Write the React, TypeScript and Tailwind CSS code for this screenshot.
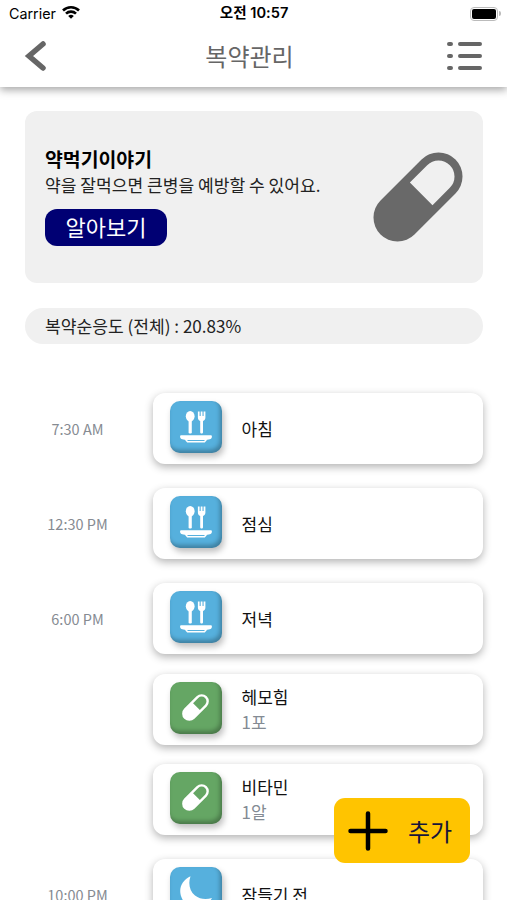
type IconName = "meal" | "pill" | "moon";

type Item = {
  icon: IconName;
  name: string;
  amount?: string;
};

type Group = {
  time: string;
  items: Item[];
};

const schedule: Group[] = [
  { time: "7:30 AM", items: [{ icon: "meal", name: "아침" }] },
  { time: "12:30 PM", items: [{ icon: "meal", name: "점심" }] },
  {
    time: "6:00 PM",
    items: [
      { icon: "meal", name: "저녁" },
      { icon: "pill", name: "헤모힘", amount: "1포" },
      { icon: "pill", name: "비타민", amount: "1알" },
    ],
  },
  { time: "10:00 PM", items: [{ icon: "moon", name: "잠들기 전" }] },
];

function PillIcon({ className }: { className: string }) {
  return (
    <svg viewBox="0 0 90 90" className={className} fill="currentColor">
      <g transform="rotate(-45 45 45)">
        <path
          fillRule="evenodd"
          d="M16 21H74A24 24 0 0 1 74 69H16A24 24 0 0 1 16 21ZM49.5 29V61H74A16 16 0 0 0 74 29Z"
        />
      </g>
    </svg>
  );
}

function MealIcon() {
  return (
    <svg viewBox="0 0 52 52" className="size-[52px]" fill="currentColor">
      <ellipse cx="20.2" cy="15.3" rx="4.4" ry="5.2" />
      <rect x="18.6" y="18" width="3.2" height="14.5" rx="1.2" />
      <path d="M27.9 10.5h1.7v4.4h1.1v-4.4h1.8v4.4h1.1v-4.4h1.8v6.1c0 1.9-1 3-2.4 3.4v11.2c0 .8-.6 1.3-1.4 1.3s-1.4-.5-1.4-1.3V20c-1.4-.4-2.3-1.5-2.3-3.4Z" />
      <path d="M11 34.2h30c1.1 0 1.100 1.700.6 2.700-.4.9-1.400 1.300-2.900 1.600l-2.700.4H16l-2.700-.4c-1.500-.3-2.500-.7-2.900-1.600-.5-1-.5-2.700.6-2.700Z" />
      <path
        d="M15.5 38.200l2 2.600h17l2-2.600"
        fill="none"
        stroke="currentColor"
        strokeWidth="1.500"
      />
    </svg>
  );
}

function MoonIcon() {
  return (
    <svg viewBox="0 0 52 52" className="size-[52px]" fill="currentColor">
      <path d="M20.5 9.200C11 13.500 7.500 23.500 12.500 32.500c6 11 22.500 11 29.500-1.500-5.500 1.500-12 1.500-17-2.500-5.500-4.500-7-12-4.500-19.300Z" />
    </svg>
  );
}

function Tile({ icon }: { icon: IconName }) {
  const color = icon === "pill" ? "bg-[#65a664]" : "bg-[#56b0dd]";
  return (
    <div
      className={`${color} flex size-[52px] shrink-0 items-center justify-center rounded-[10px] text-white shadow-[2px_4px_6px_rgba(0,0,0,0.25),inset_-2px_-3px_4px_rgba(0,0,0,0.28)]`}>
      {icon === "meal" && <MealIcon />}
      {icon === "pill" && <PillIcon className="size-[27px]" />}
      {icon === "moon" && <MoonIcon />}
    </div>
  );
}

function StatusBar() {
  return (
    <div className="flex h-[27px] items-center justify-between pr-[6px] pl-[9px] font-['Inter','Noto_Sans_CJK_KR',sans-serif] text-black">
      <div className="flex flex-1 items-center gap-[6px] text-[14.3px]">
        Carrier
        <svg viewBox="0 0 18 14" className="mb-[3px] h-[14px] w-[18px]">
          <g fill="none" stroke="#000" strokeWidth="2.6">
            <path d="M1 5.5a11.3 11.3 0 0 1 16 0" />
            <path d="M4 8.7a7.1 7.1 0 0 1 10 0" />
          </g>
          <path d="M9 13.8 6.2 11a4 4 0 0 1 5.6 0Z" />
        </svg>
      </div>
      <div className="mr-[2px] text-[14.6px] font-semibold">오전 10:57</div>
      <div className="flex flex-1 items-center justify-end gap-px">
        <div className="h-[14px] w-[28px] rounded-[4px] border-[1.5px] border-[#bbb] p-px">
          <div className="h-full rounded-[2px] bg-black" />
        </div>
        <div className="h-[5px] w-[2px] rounded-r-full bg-[#bbb]" />
      </div>
    </div>
  );
}

function Header() {
  return (
    <header className="relative h-[87px] bg-white shadow-[0_3px_8px_rgba(0,0,0,0.35)]">
      <StatusBar />
      <div className="flex h-[58px] items-center justify-between px-[24px] text-[#666]">
        <svg viewBox="0 0 24 32" className="mr-[5px] h-[32px] w-[24px]">
          <path
            d="M19 4 5 16l14 12"
            fill="none"
            stroke="currentColor"
            strokeWidth="5.5"
            strokeLinecap="round"
          />
        </svg>
        <h1 className="pb-px text-[24px] leading-none">복약관리</h1>
        <svg viewBox="0 0 37 30" className="h-[30px] w-[37px]" fill="none">
          <path
            d="M14 3H34M14 15H34M14 27H34M3 3h2M3 15h2M3 27h2"
            stroke="currentColor"
            strokeWidth="4"
            strokeLinecap="round"
          />
        </svg>
      </div>
    </header>
  );
}

function Banner() {
  return (
    <section className="flex h-[172px] items-center justify-between rounded-[12px] bg-[#f0f0f0] pr-[20px] pl-[20px]">
      <div className="pb-[3px]">
        <h2 className="text-[19.4px] leading-[26px] font-bold text-black">약먹기이야기</h2>
        <p className="text-[17.1px] leading-[26px]">약을 잘먹으면 큰병을 예방할 수 있어요.</p>
        <button className="mt-[11px] flex h-[37px] w-[122px] items-center justify-center rounded-[12px] bg-[#000073] pb-px text-[22px] text-white">
          알아보기
        </button>
      </div>
      <PillIcon className="size-[90px] text-[#696969]" />
    </section>
  );
}

function Card({ item }: { item: Item }) {
  return (
    <div className="flex h-[71px] items-start rounded-[12px] bg-white pt-[8px] pl-[16.5px] shadow-[0_3px_9px_rgba(0,0,0,0.3)]">
      <Tile icon={item.icon} />
      <div className="ml-[20px] flex h-[54px] flex-col justify-center text-[17px] leading-[25px] text-[#111]">
        <p>{item.name}</p>
        {item.amount && <p className="text-[#848b94]">{item.amount}</p>}
      </div>
    </div>
  );
}

export default function App() {
  return (
    <div className="relative h-[900px] w-[507px] overflow-hidden bg-white font-['Noto_Sans_CJK_KR',sans-serif] text-[#222]">
      <Header />
      <main className="pt-[24px] pr-[24px] pl-[25px]">
        <Banner />
        <div className="mt-[25px] flex h-[36px] items-center rounded-full bg-[#f0f0f0] pl-[20px] text-[17.1px]">
          복약순응도 (전체) : 20.83%
        </div>
        <div className="mt-[49px] flex flex-col gap-[24.2px]">
          {schedule.map((group) => (
            <div key={group.time} className="flex">
              <div className="flex h-[71px] w-[105px] shrink-0 items-center justify-center text-[14.5px] text-[#868b92]">
                {group.time}
              </div>
              <div className="ml-[23px] flex flex-1 flex-col gap-[19.3px]">
                {group.items.map((item) => (
                  <Card key={item.name} item={item} />
                ))}
              </div>
            </div>
          ))}
        </div>
      </main>

      {/* add button */}
      <button className="absolute top-[798px] left-[334px] flex h-[65px] w-[136px] items-center rounded-[11px] bg-[#ffc400] pl-[14px] text-[24px] text-[#17153a]">
        <svg viewBox="0 0 40 40" className="size-[40px]">
          <path d="M20 2.5v35M2.5 20h35" stroke="#000" strokeWidth="4.5" strokeLinecap="round" />
        </svg>
        <span className="ml-[20px]">추가</span>
      </button>
    </div>
  );
}
